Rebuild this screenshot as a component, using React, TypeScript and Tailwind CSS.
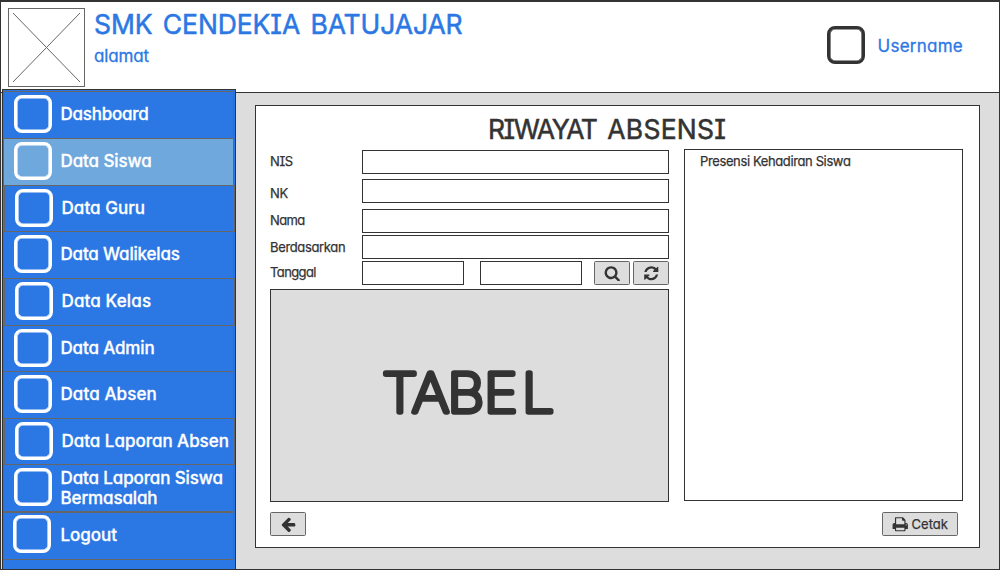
type Item = { label: string; height: string; inset: string; tracking: string; active?: boolean };

const menu: Item[] = [
  { label: "Dashboard", height: "h-[47px]", inset: "ml-0", tracking: "tracking-[-0.25px]" },
  { label: "Data Siswa", height: "h-[47px]", inset: "ml-0", tracking: "tracking-[-0.1px]", active: true },
  { label: "Data Guru", height: "h-[46px]", inset: "ml-px", tracking: "tracking-[0.05px]" },
  { label: "Data Walikelas", height: "h-[47px]", inset: "ml-0", tracking: "tracking-[-0.18px]" },
  { label: "Data Kelas", height: "h-[47px]", inset: "ml-px", tracking: "tracking-[0.13px]" },
  { label: "Data Admin", height: "h-[46px]", inset: "ml-0", tracking: "tracking-[-0.15px]" },
  { label: "Data Absen", height: "h-[47px]", inset: "ml-0", tracking: "tracking-[0.1px]" },
  { label: "Data Laporan Absen", height: "h-[46px]", inset: "ml-px", tracking: "tracking-[-0.02px]" },
  { label: "Data Laporan Siswa Bermasalah", height: "h-[48px]", inset: "ml-0", tracking: "tracking-[-0.13px]" },
  { label: "Logout", height: "h-[47px]", inset: "ml-0", tracking: "tracking-[-0.05px]" },
];

const icons = {
  search:
    "M1216 832q0-185-131.5-316.5t-316.5-131.5-316.5 131.5-131.5 316.5 131.5 316.5 316.5 131.5 316.5-131.5 131.5-316.5zm512 832q0 52-38 90t-90 38q-54 0-90-38l-343-342q-179 124-399 124-143 0-273.5-55.5t-225-150-150-225-55.5-273.5 55.5-273.5 150-225 225-150 273.5-55.5 273.5 55.5 225 150 150 225 55.5 273.5q0 220-124 399l343 343q37 37 37 90z",
  refresh:
    "M1639 1056q0 5-1 7-64 268-268 434.5t-478 166.5q-146 0-282.5-55t-243.5-157l-129 129q-19 19-45 19t-45-19-19-45v-448q0-26 19-45t45-19h448q26 0 45 19t19 45-19 45l-137 137q71 66 161 102t187 36q134 0 250-65t186-179q11-17 53-117 8-23 30-23h192q13 0 22.5 9.5t9.5 22.5zm25-800v448q0 26-19 45t-45 19h-448q-26 0-45-19t-19-45 19-45l138-138q-148-137-349-137-134 0-250 65t-186 179q-11 17-53 117-8 23-30 23h-199q-13 0-22.5-9.5t-9.5-22.5v-7q65-268 270-434.5t480-166.5q146 0 284 55.5t245 156.5l130-129q19-19 45-19t45 19 19 45z",
  back:
    "M1664 896v128q0 53-32.5 90.5t-84.5 37.5h-704l293 294q38 36 38 90t-38 90l-75 76q-37 37-90 37-52 0-91-37l-651-652q-37-37-37-90 0-52 37-91l651-650q38-38 91-38 52 0 90 38l75 74q38 38 38 91t-38 91l-293 293h704q52 0 84.5 37.5t32.5 90.5z",
  print:
    "M448 1536h896v-256h-896v256zm0-640h896v-384h-160q-40 0-68-28t-28-68v-160h-640v640zm1152 64q0-26-19-45t-45-19-45 19-19 45 19 45 45 19 45-19 19-45zm128 0v416q0 13-9.5 22.5t-22.5 9.5h-224v160q0 40-28 68t-68 28h-960q-40 0-68-28t-28-68v-160h-224q-13 0-22.5-9.5t-9.5-22.5v-416q0-79 56.5-135.5t135.5-56.5h64v-544q0-40 28-68t68-28h672q40 0 88 20t76 48l152 152q28 28 48 76t20 88v256h64q79 0 135.5 56.5t56.5 135.5z",
};

function Icon({ name }: { name: keyof typeof icons }) {
  return (
    <svg viewBox="0 0 1792 1792" className="size-[16.5px] shrink-0 fill-[#333]">
      <path d={icons[name]} />
    </svg>
  );
}

function Button({ icon, label, width }: { icon: keyof typeof icons; label?: string; width: string }) {
  return (
    <button className={`flex h-6 items-center justify-center gap-[3px] rounded-[1.5px] border border-[#666] bg-[#ddd] text-[13px] leading-5 [-webkit-text-stroke:0.25px] ${width}`}>
      <Icon name={icon} />
      {label}
    </button>
  );
}

function Field({ label, margin, shift, tracking }: { label: string; margin: string; shift: string; tracking: string }) {
  return (
    <label className={`flex h-6 ${margin}`}>
      <span className={`w-[92px] text-[13px] leading-6 [-webkit-text-stroke:0.25px] ${shift} ${tracking}`}>{label}</span>
      <input className="w-[307px] border border-[#333] bg-white px-2 outline-none" />
    </label>
  );
}

function MenuItem({ item }: { item: Item }) {
  const last = item.label === "Logout";
  const twoLines = item.label.endsWith("Bermasalah");
  return (
    <li className={`${item.height} ${item.inset}`}>
      <a
        className={`flex ${twoLines ? "h-full" : "h-[calc(100%+1px)]"} w-[231px] items-start border border-[#666] ${last ? "pt-[2px] pl-[9px]" : "pt-[3px] pl-[10px]"} ${item.active ? "bg-[#6fa8dc]" : "bg-[#2b78e4]"}`}
      >
        <span className="size-[38px] shrink-0 rounded-[8px] border-[3px] border-white shadow-[inset_0_0_0_0.6px_#fff]" />
        <span
          className={`${last ? "ml-[9.5px] pt-px" : "ml-[8.5px]"} ${twoLines ? "pt-[2px]" : ""} flex h-[38px] w-[173px] shrink-0 items-center text-[17px] leading-5 font-medium text-white [-webkit-text-stroke:0.3px] ${item.tracking}`}
        >
          {item.label}
        </span>
      </a>
    </li>
  );
}

export default function App() {
  return (
    <div className="flex h-[570px] w-[1000px] flex-col border border-t-2 border-[#333] bg-[#ddd] font-['Inter','Liberation_Sans',sans-serif] text-[#333] [font-feature-settings:'cv11','cv08']">
      <header className="flex h-[91px] shrink-0 border-b border-[#333] bg-white text-[#2b78e4]">
        <svg viewBox="0 0 77 79" className="mt-[6px] ml-[7px] h-[79px] w-[77px] shrink-0 fill-none stroke-[#666]">
          <rect x="0.5" y="0.5" width="76" height="78" />
          <path d="M5 5L72 74M72 5L5 74" />
        </svg>
        <div className="ml-[9px] flex-1">
          <h1 className="mt-[6px] text-[26.5px] leading-8 tracking-[-0.1px] [word-spacing:3px] [-webkit-text-stroke:0.5px]">SMK CENDEKIA BATUJAJAR</h1>
          <p className="mt-1 text-[17px] leading-6 tracking-[-0.15px] [-webkit-text-stroke:0.3px]">alamat</p>
        </div>
        <div className="mt-[24px] mr-[36px] flex h-[38px] items-center">
          <span className="mr-[13px] size-[38px] rounded-[8px] border-[3px] border-[#333] shadow-[inset_0_0_0_0.6px_#333]" />
          <span className="pt-px text-[17px] leading-6 tracking-[0.25px] [-webkit-text-stroke:0.3px]">Username</span>
        </div>
      </header>

      <div className="flex min-h-0 flex-1">
        <nav className="z-10 -mt-1 ml-px w-[234px] shrink-0 border border-b-0 border-[#333] bg-[#2b78e4] pt-px">
          <ul>
            {menu.map((item) => (
              <MenuItem key={item.label} item={item} />
            ))}
          </ul>
        </nav>

        <main className="mt-3 ml-[19px] h-[443px] w-[725px] border border-[#333] bg-white pl-[14px]">
          <h2 className="mt-[7px] ml-[218px] h-8 text-[26.5px] leading-8 whitespace-nowrap [-webkit-text-stroke:0.5px] [word-spacing:5px]">
            <span className="tracking-[-1.5px]">RIWAYAT </span>
            <span className="tracking-[0.25px]">ABSENSI</span>
          </h2>
          <div className="flex gap-[15px]">
            <section className="w-[399px] pt-[5px]">
              <Field label="NIS" margin="mt-0" shift="-mt-px" tracking="tracking-[-0.4px]" />
              <Field label="NK" margin="mt-[5px]" shift="mt-[2px]" tracking="tracking-[-0.4px]" />
              <Field label="Nama" margin="mt-[6px]" shift="-mt-px" tracking="tracking-[-0.6px]" />
              <Field label="Berdasarkan" margin="mt-[2px]" shift="mt-0" tracking="tracking-[-0.35px]" />
              <div className="mt-[2px] flex h-6">
                <span className="-mt-px w-[92px] text-[13px] leading-6 tracking-[-0.6px] [-webkit-text-stroke:0.25px]">Tanggal</span>
                <input className="mr-4 w-[102px] border border-[#333] bg-white outline-none" />
                <input className="mr-3 w-[102px] border border-[#333] bg-white outline-none" />
                <Button icon="search" width="mr-[3px] w-9" />
                <Button icon="refresh" width="w-9" />
              </div>
              <div className="mt-1 flex h-[213px] items-center justify-center border border-[#333] bg-[#ddd]">
                <svg viewBox="0 0 180 60" className="mt-[-6px] h-[60px] w-[180px] overflow-visible">
                  <text
                    x="2 29.8 62.6 96.4 131.5"
                    y="48.5"
                    fontSize="53"
                    transform="scale(1.08 1)"
                    className="fill-[#333] stroke-[#333] font-thin [stroke-linecap:round] [stroke-linejoin:round] [stroke-width:5.4px]"
                  >
                    TABEL
                  </text>
                </svg>
              </div>
            </section>
            <section className="mt-1 h-[352px] w-[279px] border border-[#333] px-[15px]">
              <p className="-mt-px text-[13px] leading-6 tracking-[-0.38px] [-webkit-text-stroke:0.25px]">Presensi Kehadiran Siswa</p>
            </section>
          </div>
          <div className="mt-[10px] mr-[21px] flex justify-between">
            <Button icon="back" width="w-9" />
            <Button icon="print" label="Cetak" width="w-[76px]" />
          </div>
        </main>
      </div>
    </div>
  );
}
